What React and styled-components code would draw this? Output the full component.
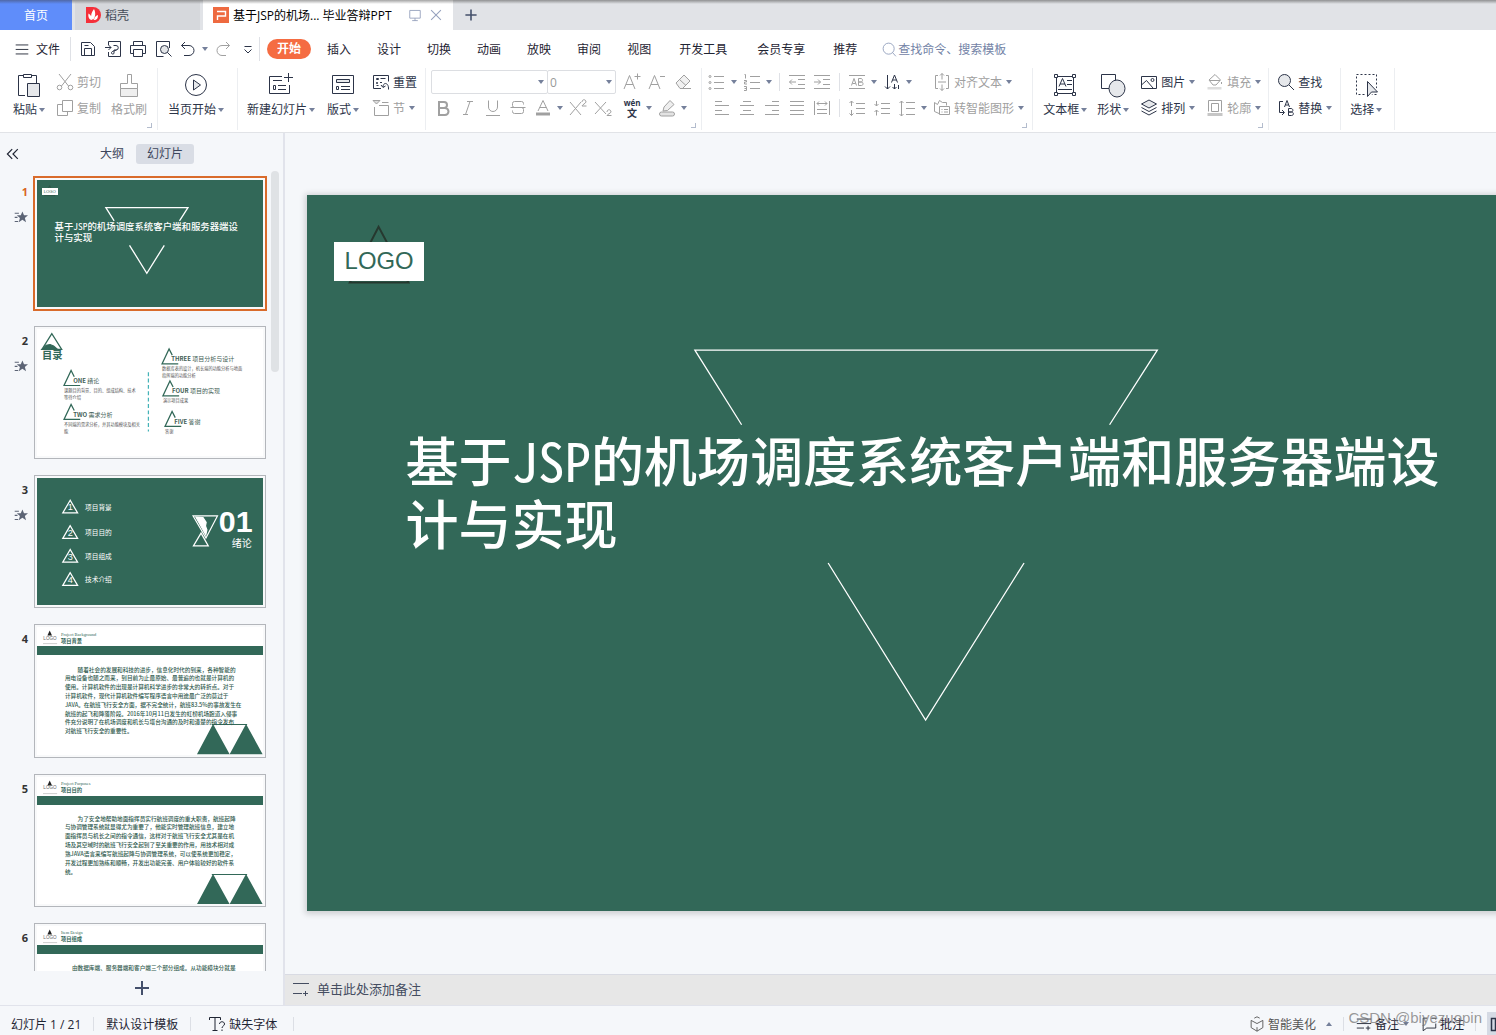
import React from "react";
import styled, { createGlobalStyle, css } from "styled-components";

const GlobalStyle = createGlobalStyle`
  * {
    box-sizing: border-box;
  }

  body {
    margin: 0;
    background: #f5f7fa;
  }

  body,
  button,
  input,
  select {
    font-family: "Open Sans", "Noto Sans CJK SC", sans-serif;
    font-size: 12px;
    color: #1f2533;
  }

  button {
    border: 0;
    padding: 0;
    background: none;
    white-space: nowrap;
  }
`;

const green = "#326858";
const ink = "#2c3448";
const muted = "#a0a0a0";

/* ---------- icons ---------- */

const Svg = styled.svg`
  display: block;
  flex: none;
  fill: none;
  stroke: currentColor;
`;

const lines = (...rows) => <path d={rows.join("")} />;

const icons = {
  menu: lines("M3 5.5h14", "M3 10.5h14", "M3 15.5h14"),
  save: (
    <>
      <path d="M3.5 3.5h9l4 4v9h-13z" />
      <path d="M6.5 16.5v-7h7v7M6.5 6.5h4" />
    </>
  ),
  pdf: (
    <>
      <path d="M5.5 6V2.5h12v15h-12V13" />
      <path d="M2 8.5h6M5.5 6l2.5 2.5-2.5 2.5" />
      <path d="M10.5 6.5h2.5a2 2 0 0 1 0 4.5h-2v3.5c-1 1-3 .5-2.5-1s3-1.5 5-2.5" />
    </>
  ),
  print: (
    <>
      <path d="M5.5 6.5v-4h9v4M5.5 14.5h-3v-8h15v8h-3" />
      <path d="M5.5 10.5h9v7h-9z" />
    </>
  ),
  preview: (
    <>
      <path d="M16.5 9V2.5h-13v15h7" />
      <circle cx="11.5" cy="10.5" r="4" fill="#e3e5e8" />
      <path d="M14.5 13.5l4 4" />
    </>
  ),
  undo: <path d="M7 3L3.5 6.5 7 10M3.5 6.5H11a5 5 0 0 1 0 10H6" />,
  redo: <path d="M13 3l3.5 3.5L13 10M16.5 6.5H9a5 5 0 0 0 0 10h4" />,
  more: <path d="M6.5 7.5h7M6.5 10.5L10 14l3.5-3.5" />,
  search: (
    <>
      <circle cx="9" cy="9" r="6.5" />
      <path d="M13.5 13.5l4 4.5" />
    </>
  ),
  find: (
    <>
      <circle cx="8.5" cy="8.5" r="6" fill="#e6e8eb" />
      <path d="M13 13l5 5" />
    </>
  ),
  cut: (
    <>
      <path d="M4 2l9.5 12M16 2L6.5 14" />
      <circle cx="4.5" cy="15.5" r="2.3" />
      <circle cx="15.5" cy="15.5" r="2.3" />
    </>
  ),
  copy: (
    <>
      <path d="M7.5 2.5h10v11h-10z" />
      <path d="M7.5 6.5h-5v11h10v-4" />
    </>
  ),
  reset: (
    <>
      <path d="M10 16.5H2.5v-13h15v6" />
      <path d="M5.5 6.5h2v1h-2zM9.5 6.5h5M5.5 10.5h1v1h-1zM9 10.5h2M5.5 13.5h2" />
      <path d="M10 13l2 2.5 2.5-1.5M12 15c0-5 6-5 5.5 2.5" />
    </>
  ),
  section: (
    <>
      <path d="M2 2.5h7L5.5 6z" fill="#ddd" />
      <path d="M11 4.5h6.5M3.5 9v8.5h14v-10H8" />
    </>
  ),
  fontUp: <path d="M3 17L8.5 3.5 14 17M5 12.5h7M16.5 1.5v6M13.5 4.5h6" />,
  fontDown: <path d="M3 17L8.5 3.5 14 17M5 12.5h7M14 4.5h5" />,
  eraser: (
    <>
      <path d="M3 11l8-8 6 6-7.5 7.5H7z" fill="#f1f1f1" />
      <path d="M6.5 7.5l6.5 6M7 16.5h11" />
    </>
  ),
  bold: <path strokeWidth="2" d="M6 4v13M5 4h6a3 3 0 0 1 0 6H6h6a3.3 3.3 0 0 1 0 7H5" />,
  italic: <path d="M9 3.5h6M5 16.5h5M12 3.5l-4.5 13" />,
  underline: <path d="M5.5 2.5V9a4.5 4.5 0 0 0 9 0V2.5M3 17.5h14" />,
  strike: (
    <path d="M15.5 6.5v-1a2 2 0 0 0-2-2h-7a2 2 0 0 0-2 2v2a2 2 0 0 0 2 2h7a2 2 0 0 1 2 2v2a2 2 0 0 1-2 2h-7a2 2 0 0 1-2-2v-1M2.5 9.5h15" />
  ),
  fontColor: (
    <>
      <path d="M5 13L10 2.5 15 13M6.5 9.5h7" />
      <path d="M3 16h14" strokeWidth="3" />
    </>
  ),
  sup: <path d="M2 4l11 13M13 4L2 17M14 4c0-3 4-3 4 0 0 1-4 3-4 4h4.5" />,
  sub: <path d="M2 4l11 12M13 4L2 16M14 14c0-3 4-3 4 0 0 1-4 2.500-4 3.5h4.5" />,
  marker: (
    <>
      <path d="M7 9l6-6.5 4 4-6.5 6L6 13z" fill="#eee" />
      <rect x="2.5" y="14" width="15" height="4" rx="2" fill="#e3e3e3" />
    </>
  ),
  bullets: (
    <>
      <path d="M7 4.5h10M7 10.5h10M7 16.5h10" />
      <circle cx="3" cy="4.5" r="1" />
      <circle cx="3" cy="10.5" r="1" />
      <circle cx="3" cy="16.5" r="1" />
    </>
  ),
  numbers: (
    <>
      <path d="M8 4.5h10M8 10.5h10M8 16.5h10" />
      <path d="M2.5 2.5h1v4M2 8.5h2.5v1.5H2.5v2h2.5M2 14.5h2.5v4H2M2.5 16.5h2" />
    </>
  ),
  outdent: <path d="M2 3.5h16M11 7.5h7M11 12.5h7M2 16.5h16M9 10H2.5M5 7.5L2.5 10 5 12.5" />,
  indent: <path d="M2 3.5h16M11 7.5h7M11 12.5h7M2 16.5h16M2 10h6.5M6 7.5L8.5 10 6 12.5" />,
  caseBox: (
    <>
      <path d="M2 3.5h16M2 16.5h16" />
      <path d="M4.5 13.5L7 6.5l2.5 7M5.5 11.5h3M11.5 6.5v7h3c2 0 2-3.5 0-3.5h-3H14c2 0 2-3.5 0-3.5z" />
    </>
  ),
  textDir: (
    <>
      <path d="M5.5 3v14M3 14.5L5.5 17 8 14.5" />
      <path d="M9.5 10.5l3-7.5 3 7.5M10.5 8h4M12.5 12v5M10.5 15l2 2 2-2M16.5 13v4" />
    </>
  ),
  alignText: (
    <>
      <path d="M6 3.5H3.5v13H6M14 3.5h2.5v13H14" />
      <path d="M10 1.5v6M8 3.5l2-2 2 2M10 18.5v-6M8 16.5l2 2 2-2M6 10h8" />
    </>
  ),
  smart: (
    <>
      <path d="M7 15.5l-4.5-2v-9l3 2 2-4 3 2h4v3" />
      <path d="M7.5 8.5h10v8h-10zM9.5 11.5h1M12 11.5h4M9.5 14h1M12 14h4" />
    </>
  ),
  left: lines("M3 3.5h7", "M3 7.5h14", "M3 12.5h7", "M3 16.5h14"),
  center: lines("M6 3.5h8", "M3 7.5h14", "M6 12.5h8", "M3 16.5h14"),
  right: lines("M10 3.5h7", "M3 7.5h14", "M10 12.5h7", "M3 16.5h14"),
  justify: lines("M3 3.5h14", "M3 7.5h14", "M3 12.5h14", "M3 16.5h14"),
  distribute: (
    <path d="M2.5 3v14M17.5 3v14M5 5.5h10M7 3.5l-2 2 2 2M13 3.5l2 2-2 2M5 11.5h10M5 15.5h10" />
  ),
  spaceUp: <path d="M9 5.5h9M9 10.5h9M9 15.5h9M4.5 3v5M2.5 5l2-2 2 2M4.5 17.5V12M2.5 15.5l2 2 2-2" />,
  spaceDown: <path d="M9 5.5h9M9 10.5h9M9 15.5h9M4.5 3v5M2.5 6l2 2 2-2M4.5 17.5V12M2.5 14l2-2 2 2" />,
  spacing: <path d="M9 4.5h9M9 10.5h9M9 16.5h9M4.5 3v15M2.5 5l2-2 2 2M2.5 16l2 2 2-2" />,
  picture: (
    <>
      <path d="M2.5 4.5h15v12h-15z" />
      <path d="M3 12.5l4.5-4 6.5 7.5" />
      <circle cx="13.5" cy="8" r="1.5" />
    </>
  ),
  layers: (
    <>
      <path d="M2.5 13L10 17l7.5-4M2.5 9.5L10 13.5l7.5-4" />
      <path d="M2.5 6L10 2l7.5 4L10 10z" fill="#e6e8eb" />
    </>
  ),
  fill: (
    <>
      <path d="M4 8l6-5.5L15.5 8 11 13H8z" />
      <path d="M5 8.5h10M16.5 10v2" />
      <rect x="2.5" y="15" width="14" height="2.5" fill="#ddd" stroke="none" />
    </>
  ),
  outline: (
    <>
      <path d="M3.5 13.5v-11h13v11M6.5 13.5v-8h7v8z" />
      <rect x="2.5" y="15" width="15" height="3" fill="#c6c6c6" stroke="none" />
    </>
  ),
  replace: (
    <>
      <path d="M7 3.5H3.5v11H8M6 12l2.5 2.5L6 17" />
      <path d="M8.5 9L11 2.5 13.5 9M9.5 7h3M12.5 10.5v7h3c2.5 0 2.5-3.5 0-3.5h-3 2.5c2.5 0 2.5-3.5 0-3.5z" />
    </>
  ),
  plus: <path d="M10 3v14M3 10h14" strokeWidth="2" />,
  collapse: <path d="M9 4l-6 6 6 6M16 4l-6 6 6 6" strokeWidth="1.5" />,
  star: (
    <>
      <path d="M1 4.5h6M1 10.5h4M1 16.5h5" strokeWidth="1.5" />
      <path
        fill="currentColor"
        stroke="none"
        d="M12 2l2.3 5.5h5.7l-4.500 3.800 1.700 6.200-5.200-3.500-5.200 3.500 1.700-6.200L4 7.5h5.700z"
      />
    </>
  ),
  notes: <path d="M2 4.5h16M2 9.5h16M2 14.5h8M14.5 12v5M12 14.5h5" />,
  notesLine: <path d="M2 4.5h16M2 14.5h9M14.5 12v5M12 14.5h5" />,
  missing: (
    <>
      <path d="M2.5 6V3.5h11V6M8 3.5v13M5.5 16.5h5" />
      <path d="M12.5 10c0-3 5-3 5 0 0 2-2.5 2-2.5 4M15 15.5v1.5" />
    </>
  ),
  cube: (
    <>
      <path d="M7 3.5l3-1.5 3 1.5M3.5 6v8l6.5 4 6.5-4V6" />
      <path d="M3.5 6L10 9.5 16.5 6M10 13.5V18" />
    </>
  ),
  comment: <path d="M8 3.5H3.5v14l4-3h10v-5M13 3.5h4.5V5" />,
  monitor: <path d="M2.5 3.5h15v11h-15zM10 14.5v4M6 18h8" strokeWidth="1.3" />,
  close: <path d="M3 3l14 14M17 3L3 17" strokeWidth="1.5" />,
};

function Icon({ name, size = 20 }) {
  return (
    <Svg width={size} height={size} viewBox="0 0 20 20" aria-hidden="true">
      {icons[name]}
    </Svg>
  );
}

const bigIcons = {
  paste: (
    <>
      <path d="M10 24.5H3.5v-20H8M17 4.5h4.5V12" />
      <path d="M8.5 3.5h8v3h-8z" />
      <path d="M12.5 12.5h12v13h-12z" fill="#e6e8eb" />
    </>
  ),
  painter: (
    <>
      <path d="M12.5 12.5v-9h4v9h6v5h-17v-5z" />
      <path d="M5.5 17.5h17v8h-17z" fill="#efefef" />
    </>
  ),
  play: (
    <>
      <circle cx="14" cy="14" r="10.5" />
      <path d="M11.5 9v10l7-5z" fill="#e6e8eb" />
    </>
  ),
  newSlide: (
    <>
      <path d="M15 5.5H2.5v17h20V14M6 9.5h9M6.5 14.5h2v4h-2zM11 14.5h8M11 18.5h8" />
      <path d="M21.5 2v9M17 6.5h9" />
    </>
  ),
  layout: (
    <>
      <path d="M3.5 4.5h21v18h-21z" />
      <path d="M7.5 8.5h13v3h-13z" fill="#e6e8eb" />
      <path d="M7.5 15.5h2v3h-2zM12 15.5h9M12 18.5h9" />
    </>
  ),
  textBox: (
    <>
      <path d="M5.5 5.5h17v17h-17zM7 18.5h14M16 9.5h5M16 13.5h5M8 15.5l3.5-8 3.5 8M9 13h5" />
      <path d="M3.5 3.5h3v3h-3zM21.5 3.5h3v3h-3zM3.5 21.5h3v3h-3zM21.5 21.5h3v3h-3z" fill="#fff" />
    </>
  ),
  shapes: (
    <>
      <path d="M2.5 3.5h14v14h-14z" />
      <ellipse cx="18" cy="17.5" rx="8" ry="8.5" fill="#e6e8eb" />
    </>
  ),
  select: (
    <>
      <path d="M4.5 3.5h20v20h-20z" strokeDasharray="2 2" />
      <path d="M15.5 10.5v15l4-4.5h6z" stroke="#fff" strokeWidth="4" />
      <path d="M15.5 10.5v15l4-4.5h6z" fill="#e6e8eb" />
    </>
  ),
};

function BigIcon({ name }) {
  return (
    <Svg width="28" height="28" viewBox="0 0 28 28" aria-hidden="true">
      {bigIcons[name]}
    </Svg>
  );
}

const Caret = styled.span`
  flex: none;
  width: 0;
  height: 0;
  border: 3px solid transparent;
  border-top: 4px solid #75809b;
  border-bottom: 0;
`;

/* ---------- window ---------- */

const Window = styled.div`
  display: flex;
  flex-direction: column;
  height: 100vh;
  overflow: hidden;
  position: relative;
`;

const TabStrip = styled.header`
  display: flex;
  flex: none;
  height: 30px;
  background:
    linear-gradient(rgba(90, 90, 90, 0.6), rgba(90, 90, 90, 0) 4px),
    #e1e3e7;
`;

const HomeTab = styled.button`
  width: 72px;
  margin-right: 3px;
  color: #fff;
  background: linear-gradient(rgba(70, 80, 110, 0.6), transparent 4px), #5f8dfa;
`;

const DocTab = styled.button`
  display: flex;
  align-items: center;
  gap: 4px;
  width: ${(p) => (p.$active ? "250px" : "125px")};
  margin-right: 3px;
  padding: 0 10px;
  color: ${(p) => (p.$active ? "#000" : "#444b58")};
  background:
    linear-gradient(rgba(90, 90, 90, 0.55), transparent 4px),
    ${(p) => (p.$active ? "#fff" : "#d6d8dc")};
`;

const TabActions = styled.span`
  display: flex;
  gap: 7px;
  margin-left: auto;
  color: #97a2be;
`;

const NewTab = styled.button`
  width: 30px;
  display: grid;
  place-items: center;
  color: #44506b;
`;

const MenuBar = styled.nav`
  display: flex;
  flex: none;
  align-items: center;
  height: 38px;
  padding-left: 13px;
  background: #fff;
`;

const MenuTab = styled.button`
  padding: 1px ${(p) => (p.$wide ? 15 : 13)}px 0;
  line-height: 20px;

  ${(p) =>
    p.$active &&
    css`
      padding: 0 10px;
      margin-right: 3px;
      border-radius: 10px;
      color: #fff;
      font-weight: bold;
      background: #f56c42;
    `}
`;

const FileButton = styled.button`
  display: flex;
  align-items: center;
  gap: 5px;
  padding-right: 10px;
`;

const QuickAccess = styled.div`
  display: flex;
  align-items: center;
  gap: 5px;
  width: 190px;
  padding-left: 7px;
  border-left: 1px solid #dfe1e6;
  border-right: 1px solid #dfe1e6;
  margin-right: 7px;
  height: 24px;
`;

const ToolButton = styled.button`
  display: flex;
  align-items: center;
  gap: 2px;
  height: 24px;
  color: ${(p) => (p.$off ? muted : ink)};
  margin-left: ${(p) => p.$space || 0}px;

  ${(p) =>
    p.$split &&
    css`
      width: 30px;
    `}

  & > ${Caret} {
    margin-left: 2px;
  }
`;

const SearchBox = styled.label`
  display: flex;
  align-items: center;
  margin-left: 11px;
  color: #8b99b8;
`;

const SearchInput = styled.input`
  width: 140px;
  border: 0;
  padding: 0;
  outline: 0;

  &::placeholder {
    color: #7383a6;
  }
`;

/* ---------- ribbon ---------- */

const Ribbon = styled.div`
  display: flex;
  flex: none;
  height: 65px;
  background: #fff;
  border-bottom: 1px solid #e1e3e7;
`;

const Group = styled.div`
  display: flex;
  align-items: flex-start;
  gap: ${(p) => p.$gap || 0}px;
  padding: 2px ${(p) => p.$end}px 0 ${(p) => p.$start}px;
  border-right: 1px solid #eceef1;
  height: 62px;
  position: relative;
`;

const Launcher = styled.button`
  position: absolute;
  right: 5px;
  bottom: 2px;
  width: 5px;
  height: 5px;
  border-right: 1px solid #b3bccd;
  border-bottom: 1px solid #b3bccd;
`;

const Stack = styled.div`
  display: flex;
  flex-direction: column;
  gap: 2px;
  min-width: ${(p) => p.$min || 0}px;
`;

const Row = styled.div`
  display: flex;
  align-items: center;
  gap: 5px;
  height: 24px;
  padding-left: ${(p) => p.$start || 0}px;
`;

const Divider = styled.span`
  width: 1px;
  height: 18px;
  margin: 0 2px;
  background: #dfe1e6;
`;

const BigButton = styled.button`
  display: flex;
  flex-direction: column;
  align-items: center;
  padding-top: 1px;
  color: ${(p) => (p.$off ? muted : ink)};
`;

const BigLabel = styled.span`
  display: flex;
  align-items: center;
  gap: 2px;
  line-height: 22px;
`;

const ComboBox = styled.span`
  display: flex;
  align-items: center;
  position: relative;
  width: ${(p) => p.$width}px;
  margin-right: ${(p) => (p.$last ? 0 : -6)}px;

  & > ${Caret} {
    position: absolute;
    right: 4px;
    pointer-events: none;
  }
`;

const ComboSelect = styled.select`
  appearance: none;
  width: 100%;
  height: 24px;
  padding: 0 2px;
  border: 1px solid #dcdee2;
  border-radius: 2px;
  background: #fff;
  color: #999;
`;

const Pinyin = styled.ruby`
  width: 20px;
  font-size: 10px;
  line-height: 10px;
  font-weight: bold;
  padding-top: 6px;
`;

const PinyinMark = styled.rt`
  font-size: 8px;
  line-height: 8px;
`;

function Big({ icon, label, off, caret = true }) {
  return (
    <BigButton $off={off}>
      <BigIcon name={icon} />
      <BigLabel>
        {label}
        {caret && <Caret />}
      </BigLabel>
    </BigButton>
  );
}

function Tool({ icon, label, title, off, caret, space }) {
  return (
    <ToolButton $off={off} $split={caret && !label} $space={space} aria-label={label || title}>
      <Icon name={icon} />
      {label}
      {caret && <Caret />}
    </ToolButton>
  );
}

/* ---------- slides: drawn on a 1280 x 720 canvas that scales with its box ---------- */

const unit = (n) => `calc(${n} * 100cqw / 1280)`;
const pt = (n) => (n * 4) / 3;

const Slide = styled.div`
  position: relative;
  width: 100%;
  aspect-ratio: 16 / 9;
  overflow: hidden;
  container-type: inline-size;
  background: ${(p) => (p.$dark ? green : "#fff")};
`;

const Art = styled.svg`
  position: absolute;
  inset: 0;
  width: 100%;
  height: 100%;
  fill: none;
`;

const Label = styled.div`
  position: absolute;
  left: ${(p) => unit(p.$x)};
  top: ${(p) => unit(p.$y)};
  font-size: ${(p) => unit(p.$size)};
  line-height: ${(p) => unit(p.$line || p.$size)};
  font-weight: ${(p) => p.$weight || "normal"};
  font-family: ${(p) => p.$font || '"Noto Sans CJK SC"'}, sans-serif;
  color: ${(p) => p.$color || "#fff"};
  text-indent: ${(p) => unit(p.$indent || 0)};
  white-space: pre;
`;

const HalfWidth = styled.span`
  font-family: "Noto Sans Mono CJK SC", monospace;
`;

const LogoPlate = styled.div`
  position: absolute;
  left: ${unit(27)};
  top: ${unit(47)};
  width: ${unit(91)};
  height: ${unit(39)};
  display: grid;
  place-items: center;
  background: #fff;
  color: ${green};
  font-family: "Liberation Sans", sans-serif;
  font-size: ${unit(24)};
`;

function TitleSlide() {
  return (
    <Slide $dark>
      <Art viewBox="0 0 1280 720">
        <path d="M72 32L43 88H102z" stroke="#26382f" strokeWidth="2" />
        <g stroke="#fff" strokeWidth="1.3">
          <path d="M437 231L390 156H855L807 231" vectorEffect="non-scaling-stroke" />
          <path d="M524 370L622 528L721 370" vectorEffect="non-scaling-stroke" />
        </g>
      </Art>
      <LogoPlate>LOGO</LogoPlate>
      <Label $x={99} $y={233} $size={pt(40)} $line={64} $weight={500}>
        基于<HalfWidth>JSP</HalfWidth>的机场调度系统客户端和服务器端设
        <br />
        计与实现
      </Label>
    </Slide>
  );
}

const agenda = [
  { x: 153, y: 235, en: "ONE", cn: "绪论", text: "课题目的背景、目的、组成结构、技术\n等待介绍" },
  { x: 153, y: 427, en: "TWO", cn: "需求分析", text: "不同端的需求分析，并其功能模块及相关\n能" },
  { x: 708, y: 113, en: "THREE", cn: "项目分析与设计", text: "数据库表的设计，机长端的功能分析与地面\n指挥端的功能分析" },
  { x: 713, y: 294, en: "FOUR", cn: "项目的实现", text: "演示项目成果" },
  { x: 725, y: 467, en: "FIVE", cn: "答谢", text: "答谢" },
];

function AgendaSlide() {
  return (
    <Slide>
      <Art viewBox="0 0 1280 720" stroke={green} strokeWidth="7">
        <path d="M84 26L28 116H140z" />
        <path d="M28 116l24-24 22-4 20 8 22 20z" fill={green} />
        {agenda.map((a) => (
          <path key={a.en} d={`M${a.x + 58} ${a.y + 35}l-18-35-40 85h92`} />
        ))}
        <path d="M631 245V580" stroke="#45b3b8" strokeDasharray="22 14" />
      </Art>
      <Label $x={28} $y={119} $size={58} $weight="bold" $color={green}>
        目录
      </Label>
      {agenda.map((a) => (
        <React.Fragment key={a.en}>
          <Label $x={a.x + 52} $y={a.y + 42} $size={34} $color="#3f6056">
            <b>{a.en}</b> {a.cn}
          </Label>
          <Label $x={a.x} $y={a.y + 93} $size={24} $line={39} $color="#555">
            {a.text}
          </Label>
        </React.Fragment>
      ))}
    </Slide>
  );
}

const chapters = [
  { y: 164, text: "项目背景" },
  { y: 308, text: "项目目的" },
  { y: 443, text: "项目组成" },
  { y: 574, text: "技术介绍" },
];

function ChapterSlide() {
  return (
    <Slide $dark>
      <Art viewBox="0 0 1280 720" stroke="#fff" strokeWidth="7">
        {chapters.map((c) => (
          <path key={c.y} d={`M188 ${c.y - 38}l-42 72h84z`} />
        ))}
        <path d="M884 215h138l-65 125zM929 312l-43 73h84z" />
        <path d="M900 222l40 2 18 28-4 20 8 22-6 28z" fill="#fff" />
      </Art>
      {chapters.map((c, i) => (
        <React.Fragment key={c.y}>
          <Label $x={174} $y={c.y - 22} $size={52} $font='"Liberation Sans"'>
            {i + 1}
          </Label>
          <Label $x={272} $y={c.y - 20} $size={38}>
            {c.text}
          </Label>
        </React.Fragment>
      ))}
      <Label $x={1030} $y={161} $size={172} $weight="bold" $font='"Liberation Sans"'>
        01
      </Label>
      <Label $x={1103} $y={337} $size={57}>
        绪论
      </Label>
    </Slide>
  );
}

function TextSlide({ en, cn, text, indent = 72 }) {
  return (
    <Slide>
      <Art viewBox="0 0 1280 720">
        <path d="M72 20l-13 28h26z" fill="#222" />
        <path d="M34 94h80" stroke="#bbb" strokeWidth="4" />
        <path d="M0 108h1280v50H0z" fill={green} />
        <path d="M997 550l-91 170h185zM1184 550l-93 170h187z" fill={green} />
        <path d="M990 552h200" stroke={green} strokeWidth="6" />
      </Art>
      <Label $x={36} $y={56} $size={26} $font='"Liberation Sans"' $color="#666">
        LOGO
      </Label>
      <Label $x={136} $y={32} $size={25} $font='"Liberation Serif"' $color={green}>
        {en}
      </Label>
      <Label $x={136} $y={66} $size={30} $weight="bold" $color={green}>
        {cn}
      </Label>
      <Label $x={158} $y={216} $size={32} $line={50} $weight={500} $color="#2f5a4e" $indent={indent}>
        {text.join("\n")}
      </Label>
    </Slide>
  );
}

const background = [
  "随着社会的发展和科技的进步，信息化时代的到来，各种智能的",
  "用电设备也随之而来，到目前为止最原始、最普遍的也就是计算机的",
  "使用。计算机软件的出现是计算机科学进步的非常大的转折点。对于",
  "计算机软件，现代计算机软件编写程序语言中用途最广泛的莫过于",
  "JAVA。在航班飞行安全方面，据不完全统计，航班83.5%的事故发生在",
  "航班的起飞和降落阶段。2016年10月11日发生的虹桥机场跑道入侵事",
  "件充分说明了在机场调度和机长与塔台沟通的及时和清楚的指令发布",
  "对航班飞行安全的重要性。",
];

const purposes = [
  "为了安全地帮助地面指挥员实行航班调度的重大职责，航班起降",
  "与协调管理系统就显得尤为重要了，他能实时管理航班信息，建立地",
  "面指挥员与机长之间的指令通信，这样对于航班飞行安全尤其是在机",
  "场及其空域时的航班飞行安全起到了至关重要的作用，用技术相对成",
  "熟JAVA语言来编写航班起降与协调管理系统，可以使系统更加稳定，",
  "开发过程更加熟练和顺畅，开发出功能完善、用户体验较好的软件系",
  "统。",
];

const slides = [
  <TitleSlide />,
  <AgendaSlide />,
  <ChapterSlide />,
  <TextSlide en="Project Background" cn="项目背景" text={background} />,
  <TextSlide en="Project Purposes" cn="项目目的" text={purposes} />,
  <TextSlide
    en="Item Design"
    cn="项目组成"
    indent={40}
    text={["由数据库端、服务器端和客户端三个部分组成。从功能模块分就是"]}
  />,
];

/* ---------- body ---------- */

const Body = styled.div`
  display: flex;
  flex: 1;
  min-height: 0;
`;

const Sidebar = styled.aside`
  display: flex;
  flex-direction: column;
  flex: 0 0 285px;
  border-right: 2px solid #e1e3eb;
`;

const SidebarHead = styled.div`
  display: flex;
  align-items: center;
  height: 38px;
  padding: 3px 5px 0;
  flex: none;
`;

const PanelTab = styled.button`
  padding: 0 11px;
  line-height: 20px;
  border-radius: 3px;
  color: #3d465c;
  background: ${(p) => (p.$active ? "#d9dde5" : "none")};
`;

const PanelTabs = styled.div`
  display: flex;
  gap: 1px;
  margin-left: 68px;
`;

const SlideList = styled.ol`
  display: flex;
  flex-direction: column;
  flex: 1;
  gap: 16px;
  min-height: 0;
  margin: 0;
  padding: 6px 0 0;
  overflow: hidden;
  list-style: none;
  position: relative;
`;

const SlideItem = styled.li`
  display: flex;
  flex: none;
`;

const SlideInfo = styled.div`
  display: flex;
  flex-direction: column;
  align-items: flex-end;
  gap: 8px;
  width: 34px;
  padding: 5px 6px 0 0;
  font-weight: bold;
  font-size: 11px;
  line-height: 20px;
  color: ${(p) => (p.$active ? "#d9641e" : "#333")};

  & > svg {
    color: #5c6475;
  }
`;

const Thumb = styled.button`
  width: 232px;
  padding: 2px;
  border: 1px solid #b3b6bb;
  background: #f8f9fa;
  text-align: left;

  ${(p) =>
    p.$active &&
    css`
      border-color: #d96b2b;
      box-shadow: 0 0 0 1px #d96b2b;
    `}
`;

const ScrollThumb = styled.span`
  position: absolute;
  right: 4px;
  top: 0;
  width: 8px;
  height: 201px;
  border-radius: 4px;
  background: #dfe2e5;
`;

const AddSlide = styled.button`
  display: grid;
  place-items: center;
  height: 34px;
  flex: none;
  color: #44506b;
`;

const Main = styled.main`
  display: flex;
  flex: 1;
  flex-direction: column;
  min-width: 0;
`;

const Stage = styled.div`
  flex: 1;
  min-height: 0;
  padding: 62px 0 0 22px;
  overflow: hidden;
`;

const Sheet = styled.div`
  width: 1273px;
  box-shadow: 0 1px 6px 2px rgba(0, 0, 0, 0.16);
`;

const Notes = styled.button`
  display: flex;
  align-items: center;
  flex: none;
  gap: 6px;
  height: 31px;
  padding: 0 0 3px 6px;
  border-top: 1px solid #d9dbe3;
  background: #e7e7e7;
  color: #454d61;
  font-size: 13px;
`;

const StatusBar = styled.footer`
  display: flex;
  align-items: center;
  flex: none;
  gap: 12px;
  height: 30px;
  padding: 6px 0 0 11px;
  border-top: 1px solid #e1e3eb;
  overflow: hidden;
`;

const StatusDivider = styled.span`
  width: 1px;
  height: 14px;
  background: #dcdfe5;
`;

const StatusButton = styled.button`
  display: flex;
  align-items: center;
  gap: 2px;
  padding: 0 ${(p) => p.$pad || 0}px;
  color: ${(p) => (p.$soft ? "#555" : "#1f2533")};

  & > ${Caret} {
    margin-left: ${(p) => (p.$up ? 8 : 2)}px;
    transform: ${(p) => (p.$up ? "rotate(180deg)" : "none")};
  }
`;

const StatusRight = styled.div`
  display: flex;
  align-items: center;
  gap: 11px;
  margin-left: auto;
`;

const ViewButton = styled.button`
  width: 9px;
  height: 24px;
  overflow: hidden;
  background: #d5dae4;
  color: ${ink};
`;

const Watermark = styled.span`
  position: absolute;
  right: 14px;
  bottom: 7px;
  font-family: "Liberation Sans", sans-serif;
  font-size: 15px;
  line-height: 20px;
  color: rgba(110, 110, 110, 0.7);
  pointer-events: none;
`;

const tabs = ["插入", "设计", "切换", "动画", "放映", "审阅", "视图", "开发工具", "会员专享", "推荐"];

function TitleTabs() {
  return (
    <TabStrip>
      <HomeTab>首页</HomeTab>
      <DocTab>
        <Svg width="16" height="16" viewBox="0 0 16 16">
          <path d="M1 0h7a8 8 0 0 1 0 16H1z" fill="#f5303a" stroke="none" />
          <path
            d="M8 13C5 10 6 6 9 2c2 4 1.5 8-1 11zM7 13C3.5 12.5 3 9 3.5 6.5 6 8 7 10 7 13zM9 13c0-2 1.5-4.5 4-5 0 3-1 5-4 5z"
            fill="#fff"
            stroke="none"
          />
        </Svg>
        稻壳
      </DocTab>
      <DocTab $active>
        <Svg width="16" height="16" viewBox="0 0 16 16">
          <rect width="16" height="16" fill="#ee6a40" stroke="none" />
          <path d="M4 4.5h8.5v4.5H4.5V13" stroke="#fff" strokeWidth="1.4" />
        </Svg>
        基于JSP的机场... 毕业答辩PPT
        <TabActions>
          <Icon name="monitor" size={14} />
          <Icon name="close" size={14} />
        </TabActions>
      </DocTab>
      <NewTab aria-label="新建">
        <Icon name="plus" size={16} />
      </NewTab>
    </TabStrip>
  );
}

function Menu() {
  return (
    <MenuBar>
      <FileButton>
        <Icon name="menu" size={18} />
        文件
      </FileButton>
      <QuickAccess>
        <Tool icon="save" title="保存" />
        <Tool icon="pdf" title="输出为PDF" />
        <Tool icon="print" title="打印" />
        <Tool icon="preview" title="打印预览" />
        <Tool icon="undo" title="撤销" caret />
        <Tool icon="redo" title="恢复" off />
        <Tool icon="more" title="更多" />
      </QuickAccess>
      <MenuTab $active>开始</MenuTab>
      {tabs.map((tab) => (
        <MenuTab key={tab} $wide={tab.length > 2}>
          {tab}
        </MenuTab>
      ))}
      <SearchBox>
        <Icon name="search" size={17} />
        <SearchInput aria-label="查找" placeholder="查找命令、搜索模板" />
      </SearchBox>
    </MenuBar>
  );
}

function RibbonBar() {
  return (
    <Ribbon>
      <Group $start={13} $end={10} $gap={10}>
        <Big icon="paste" label="粘贴" />
        <Stack>
          <Tool icon="cut" label="剪切" off />
          <Tool icon="copy" label="复制" off />
        </Stack>
        <Big icon="painter" label="格式刷" off caret={false} />
        <Launcher aria-label="剪贴板" />
      </Group>
      <Group $start={10} $end={13}>
        <Big icon="play" label="当页开始" />
      </Group>
      <Group $start={9} $end={8} $gap={12}>
        <Big icon="newSlide" label="新建幻灯片" />
        <Big icon="layout" label="版式" />
        <Stack>
          <Tool icon="reset" label="重置" />
          <Tool icon="section" label="节" off caret />
        </Stack>
      </Group>
      <Group $start={5} $end={7}>
        <Stack $min={263}>
          <Row>
            <ComboBox $width={117}>
              <ComboSelect aria-label="字体" />
              <Caret />
            </ComboBox>
            <ComboBox $width={69} $last>
              <ComboSelect aria-label="字号">
                <option>0</option>
              </ComboSelect>
              <Caret />
            </ComboBox>
            <Tool icon="fontUp" title="增大字号" off />
            <Tool icon="fontDown" title="减小字号" off />
            <Tool icon="eraser" title="清除格式" off space={2} />
          </Row>
          <Row $start={2}>
            <Tool icon="bold" title="加粗" off />
            <Tool icon="italic" title="倾斜" off />
            <Tool icon="underline" title="下划线" off />
            <Tool icon="strike" title="删除线" off />
            <Tool icon="fontColor" title="字体颜色" off caret />
            <Tool icon="sup" title="上标" off />
            <Tool icon="sub" title="下标" off />
            <ToolButton $split $space={4}>
              <Pinyin>
                文<PinyinMark>wén</PinyinMark>
              </Pinyin>
              <Caret />
            </ToolButton>
            <Tool icon="marker" title="突出显示" off caret />
          </Row>
        </Stack>
        <Launcher aria-label="字体设置" />
      </Group>
      <Group $start={5} $end={8}>
        <Stack $min={225}>
          <Row>
            <Tool icon="bullets" title="项目符号" off caret />
            <Tool icon="numbers" title="编号" off caret />
            <Divider />
            <Tool icon="outdent" title="减少缩进" off />
            <Tool icon="indent" title="增加缩进" off />
            <Divider />
            <Tool icon="caseBox" title="字符间距" off caret />
            <Tool icon="textDir" title="文字方向" caret />
          </Row>
          <Row $start={5}>
            <Tool icon="left" title="左对齐" off />
            <Tool icon="center" title="居中" off />
            <Tool icon="right" title="右对齐" off />
            <Tool icon="justify" title="两端对齐" off />
            <Tool icon="distribute" title="分散对齐" off />
            <Divider />
            <Tool icon="spaceUp" title="段前间距" off />
            <Tool icon="spaceDown" title="段后间距" off />
            <Tool icon="spacing" title="行距" off caret />
          </Row>
        </Stack>
        <Stack>
          <Tool icon="alignText" label="对齐文本" off caret />
          <Tool icon="smart" label="转智能图形" off caret />
        </Stack>
        <Launcher aria-label="段落设置" />
      </Group>
      <Group $start={10} $end={7} $gap={10}>
        <Big icon="textBox" label="文本框" />
        <Big icon="shapes" label="形状" />
        <Stack>
          <Tool icon="picture" label="图片" caret />
          <Tool icon="layers" label="排列" caret />
        </Stack>
        <Stack>
          <Tool icon="fill" label="填充" off caret />
          <Tool icon="outline" label="轮廓" off caret />
        </Stack>
        <Launcher aria-label="绘图设置" />
      </Group>
      <Group $start={7} $end={8}>
        <Stack>
          <Tool icon="find" label="查找" />
          <Tool icon="replace" label="替换" caret />
        </Stack>
      </Group>
      <Group $start={9} $end={12}>
        <Big icon="select" label="选择" />
      </Group>
    </Ribbon>
  );
}

function SlidePanel() {
  return (
    <Sidebar>
      <SidebarHead>
        <button aria-label="折叠">
          <Icon name="collapse" size={16} />
        </button>
        <PanelTabs>
          <PanelTab>大纲</PanelTab>
          <PanelTab $active>幻灯片</PanelTab>
        </PanelTabs>
      </SidebarHead>
      <SlideList>
        {slides.map((slide, i) => (
          <SlideItem key={i}>
            <SlideInfo $active={i === 0}>
              {i + 1}
              {i < 3 && <Icon name="star" size={14} />}
            </SlideInfo>
            <Thumb $active={i === 0}>{slide}</Thumb>
          </SlideItem>
        ))}
        <ScrollThumb />
      </SlideList>
      <AddSlide aria-label="新建幻灯片">
        <Icon name="plus" size={20} />
      </AddSlide>
    </Sidebar>
  );
}

function Status() {
  return (
    <StatusBar>
      <span>幻灯片 1 / 21</span>
      <StatusDivider />
      <span>默认设计模板</span>
      <StatusDivider />
      <StatusButton $pad={4}>
        <Icon name="missing" size={20} />
        缺失字体
      </StatusButton>
      <StatusDivider />
      <StatusRight>
        <StatusButton $soft $up>
          <Icon name="cube" size={18} />
          智能美化
          <Caret />
        </StatusButton>
        <StatusDivider />
        <StatusButton>
          <Icon name="notes" size={18} />
          备注
          <Caret />
        </StatusButton>
        <StatusButton>
          <Icon name="comment" size={18} />
          批注
        </StatusButton>
        <StatusDivider />
        <ViewButton aria-label="普通视图">
          <Svg width="20" height="20" viewBox="0 0 20 20">
            <path d="M4.5 4.5h4v12h-4zM8.5 4.5h9v12h-9z" strokeWidth="1.5" />
          </Svg>
        </ViewButton>
      </StatusRight>
    </StatusBar>
  );
}

function App() {
  return (
    <Window>
      <GlobalStyle />
      <TitleTabs />
      <Menu />
      <RibbonBar />
      <Body>
        <SlidePanel />
        <Main>
          <Stage>
            <Sheet>
              <TitleSlide />
            </Sheet>
          </Stage>
          <Notes>
            <Icon name="notesLine" size={20} />
            单击此处添加备注
          </Notes>
        </Main>
      </Body>
      <Status />
      <Watermark>CSDN @biyezuopin</Watermark>
    </Window>
  );
}

export default App;
